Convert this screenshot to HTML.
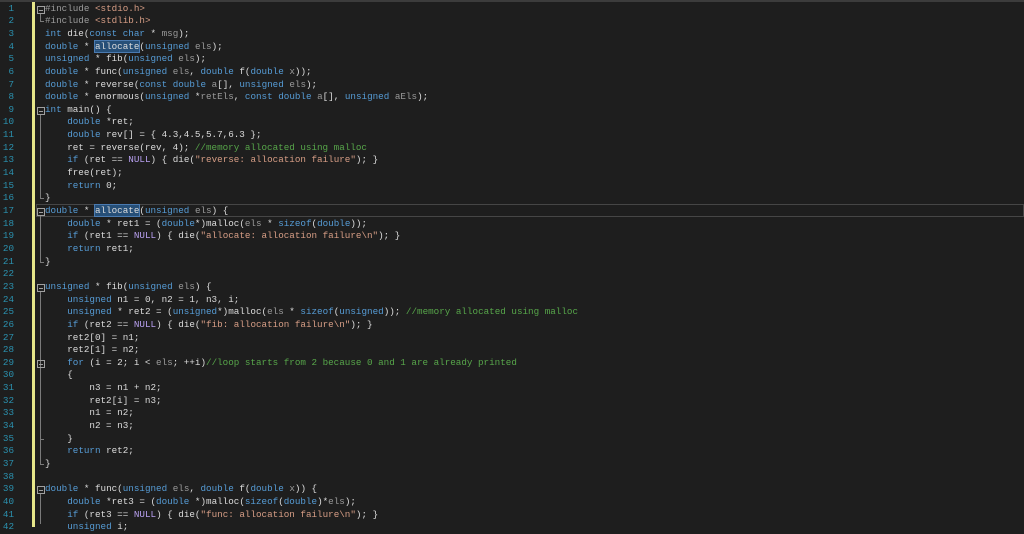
<!DOCTYPE html>
<html><head><meta charset="utf-8"><style>
body{margin:0;background:#1e1e1e;width:1024px;height:527px;overflow:hidden;position:relative;font-family:"Liberation Mono",monospace;font-size:9.25px;color:#dcdcdc}
.top{position:absolute;left:0;top:0;width:1024px;height:2px;background:#3c3c3c}
.ln{position:absolute;left:0;width:14px;text-align:right;color:#2b91af;line-height:12.65px;height:12.65px}
.l{position:absolute;left:45px;white-space:pre;line-height:12.65px;height:12.65px}
.k{color:#569cd6}.p{color:#9a9a9a}.s{color:#d69d85}.n{color:#b8a0f0}.c{color:#57a64a}.pp{color:#9b9b9b}
.bar{position:absolute;left:32px;top:2px;width:3px;height:525px;background:#e6e68a}
.fb{position:absolute;left:37px;width:6px;height:6px;border:1px solid #a0a0a0;box-sizing:content-box}
.fb:after{content:"";position:absolute;left:1px;top:3px;width:4px;height:1px;background:#a0a0a0}
.g{position:absolute;left:40px;width:1px;background:#7a7a7a}
.t{position:absolute;left:40px;width:4px;height:1px;background:#7a7a7a}
.sel{background:#264f78;outline:1px solid #4a7ab0}
.cur{position:absolute;left:36px;top:204px;width:988px;height:13px;border:1px solid #464646;box-sizing:border-box}
</style></head><body>
<div class="top"></div>
<div class="bar"></div>
<div class="cur"></div>
<div id="nums"></div>
<script>
var L=[
'<span class="pp">#include</span> <span class="s">&lt;stdio.h&gt;</span>',
'<span class="pp">#include</span> <span class="s">&lt;stdlib.h&gt;</span>',
'<span class="k">int</span> die(<span class="k">const</span> <span class="k">char</span> * <span class="p">msg</span>);',
'<span class="k">double</span> * <span class="sel">allocate</span>(<span class="k">unsigned</span> <span class="p">els</span>);',
'<span class="k">unsigned</span> * fib(<span class="k">unsigned</span> <span class="p">els</span>);',
'<span class="k">double</span> * func(<span class="k">unsigned</span> <span class="p">els</span>, <span class="k">double</span> f(<span class="k">double</span> <span class="p">x</span>));',
'<span class="k">double</span> * reverse(<span class="k">const</span> <span class="k">double</span> <span class="p">a</span>[], <span class="k">unsigned</span> <span class="p">els</span>);',
'<span class="k">double</span> * enormous(<span class="k">unsigned</span> *<span class="p">retEls</span>, <span class="k">const</span> <span class="k">double</span> <span class="p">a</span>[], <span class="k">unsigned</span> <span class="p">aEls</span>);',
'<span class="k">int</span> main() {',
'    <span class="k">double</span> *ret;',
'    <span class="k">double</span> rev[] = { 4.3,4.5,5.7,6.3 };',
'    ret = reverse(rev, 4); <span class="c">//memory allocated using malloc</span>',
'    <span class="k">if</span> (ret == <span class="n">NULL</span>) { die(<span class="s">"reverse: allocation failure"</span>); }',
'    free(ret);',
'    <span class="k">return</span> 0;',
'}',
'<span class="k">double</span> * <span class="sel">allocate</span>(<span class="k">unsigned</span> <span class="p">els</span>) {',
'    <span class="k">double</span> * ret1 = (<span class="k">double</span>*)malloc(<span class="p">els</span> * <span class="k">sizeof</span>(<span class="k">double</span>));',
'    <span class="k">if</span> (ret1 == <span class="n">NULL</span>) { die(<span class="s">"allocate: allocation failure\\n"</span>); }',
'    <span class="k">return</span> ret1;',
'}',
'',
'<span class="k">unsigned</span> * fib(<span class="k">unsigned</span> <span class="p">els</span>) {',
'    <span class="k">unsigned</span> n1 = 0, n2 = 1, n3, i;',
'    <span class="k">unsigned</span> * ret2 = (<span class="k">unsigned</span>*)malloc(<span class="p">els</span> * <span class="k">sizeof</span>(<span class="k">unsigned</span>)); <span class="c">//memory allocated using malloc</span>',
'    <span class="k">if</span> (ret2 == <span class="n">NULL</span>) { die(<span class="s">"fib: allocation failure\\n"</span>); }',
'    ret2[0] = n1;',
'    ret2[1] = n2;',
'    <span class="k">for</span> (i = 2; i &lt; <span class="p">els</span>; ++i)<span class="c">//loop starts from 2 because 0 and 1 are already printed</span>',
'    {',
'        n3 = n1 + n2;',
'        ret2[i] = n3;',
'        n1 = n2;',
'        n2 = n3;',
'    }',
'    <span class="k">return</span> ret2;',
'}',
'',
'<span class="k">double</span> * func(<span class="k">unsigned</span> <span class="p">els</span>, <span class="k">double</span> f(<span class="k">double</span> <span class="p">x</span>)) {',
'    <span class="k">double</span> *ret3 = (<span class="k">double</span> *)malloc(<span class="k">sizeof</span>(<span class="k">double</span>)*<span class="p">els</span>);',
'    <span class="k">if</span> (ret3 == <span class="n">NULL</span>) { die(<span class="s">"func: allocation failure\\n"</span>); }',
'    <span class="k">unsigned</span> i;'
];
var h='',H=12.65,T=2.6;
for(var i=0;i<L.length;i++){var y=(T+i*H).toFixed(2);
h+='<div class="ln" style="top:'+y+'px">'+(i+1)+'</div><div class="l" style="top:'+y+'px">'+L[i]+'</div>';}
function fold(a,b){var y1=T+(a-1)*H+3,y2=T+(b-1)*H;h+='<div class="fb" style="top:'+y1.toFixed(1)+'px"></div>';
if(b){h+='<div class="g" style="top:'+(y1+8).toFixed(1)+'px;height:'+(y2+6-y1-8).toFixed(1)+'px"></div><div class="t" style="top:'+(y2+6).toFixed(1)+'px"></div>';}}
fold(1,2);fold(9,16);fold(17,21);fold(23,37);fold(29,35);
var y=T+38*H+3;h+='<div class="fb" style="top:'+y.toFixed(1)+'px"></div><div class="g" style="top:'+(y+8)+'px;height:30px"></div>';
document.getElementById('nums').innerHTML=h;
</script>
</body></html>
